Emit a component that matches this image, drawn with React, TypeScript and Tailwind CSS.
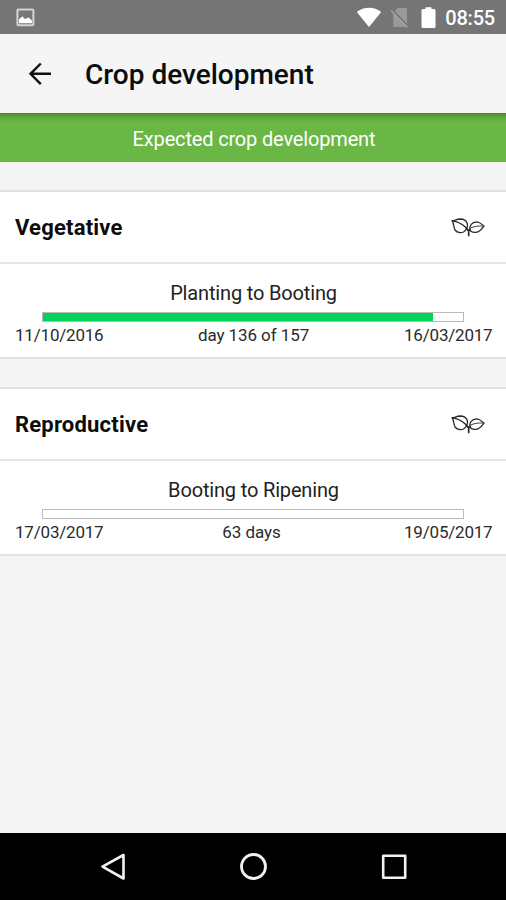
const LeafIcon = () => (
  <svg
    className="mt-px h-[20px] w-[34px]"
    viewBox="0 0 34 20"
    fill="none"
    stroke="#2a2a2a"
    strokeWidth="1.300"
    strokeLinecap="round"
    strokeLinejoin="round"
  >
    <path d="M1.200 2.800C3.500 2.800 5.500 1.100 9 1C12.500 1 15.300 2.600 16.300 5.500C17.200 8.500 15.300 12.500 12.500 14C9.500 15.200 5.800 14.500 4 12C2.500 9.500 3 5.500 1.200 2.800Z" />
    <path d="M1.200 2.800C6 3.500 10.500 5.200 14 8.800L17.500 12.300" />
    <path d="M19 12C18 7.500 21 4.200 25.500 3.900C29.500 3.900 30.700 6.900 33 8C31.200 10.300 29.500 13.700 25 14.300C22.300 14.700 20 14 19 12Z" />
    <path d="M19.500 10C23 8.600 27 7.700 32 8" strokeWidth="0.900" />
    <path d="M15.500 10.500L17.700 13V17.500M19 11.500L17.700 13" strokeWidth="1.700" />
  </svg>
);

const StatusBar = () => (
  <div className="flex h-[34px] items-center justify-between bg-[#757575] pl-[16px] pr-[11px]">
    <svg className="size-[19px]" viewBox="0 0 19 19">
      <rect x="1.400" y="1.400" width="16" height="15.800" rx="1" fill="#777" stroke="#d4d4d4" strokeWidth="2" />
      <path d="M3 15.300V11.500L6.200 8.300L9 11L12.500 9.500L16 12.500V15.300Z" fill="#fff" />
    </svg>
    <div className="flex items-center pt-px">
      <svg className="mr-[8px] h-[22px] w-[26px]" viewBox="0 0 26 22">
        <path d="M0.800 5C7.500 -0.800 18.500 -0.800 25.200 5L13 20Z" fill="#fff" />
      </svg>
      <svg className="mr-[12px] h-[22px] w-[19px]" viewBox="0 0 19 22">
        <path d="M7.500 1H15.500Q17 1 17 2.500V17L5 4.500Z" fill="#999" />
        <path d="M3.200 6V18.500Q3.200 20 4.700 20H16Z" fill="#999" />
        <path d="M1.500 3L17.500 19.500" stroke="#757575" strokeWidth="2.400" />
        <path d="M1 3.500L17.500 20.500" stroke="#a6a6a6" strokeWidth="1.300" />
      </svg>
      <svg className="mr-[9px] h-[22px] w-[15px]" viewBox="0 0 15 22">
        <path d="M4.500 2V0.300H10.500V2H13Q14.500 2 14.500 3.500V19.500Q14.500 21 13 21H2Q0.500 21 0.500 19.500V3.500Q0.500 2 2 2Z" fill="#fff" />
      </svg>
      <span className="text-[20px] leading-[22px] font-medium tracking-[-0.2px] text-white">
        08:55
      </span>
    </div>
  </div>
);

type StageProps = {
  title: string;
  period: string;
  start: string;
  end: string;
  duration: string;
  progress: number;
};

const StageCard = ({
  title,
  period,
  start,
  end,
  duration,
  progress,
}: StageProps) => (
  <section className="h-[169px] border-y-2 border-[#e2e2e2] bg-white">
    <div className="flex h-[72px] items-center justify-between border-b-2 border-[#e6e6e6] pl-[15px] pr-[21px]">
      <h2 className="pt-[2px] text-[22px] leading-7 font-bold tracking-[0.2px] text-[#0c0c0c]">
        {title}
      </h2>
      <LeafIcon />
    </div>
    <div className="pt-[15px]">
      <p className="pl-px text-center text-[20px] leading-[28px] tracking-[-0.16px] text-[#222]">
        {period}
      </p>
      <div className="mx-[42px] mt-[5px] h-[10px] border border-[#bbb]">
        <div className="h-full bg-[#04d35b]" style={{ width: `${progress}%` }} />
      </div>
      <div className="mt-[2px] grid grid-cols-[88px_1fr_88px] pl-[15px] pr-[14px] text-[17px] leading-[22px] tracking-[-0.2px] text-[#2b2b2b]">
        <span>{start}</span>
        <span className={progress > 0 ? "text-center tracking-[-0.08px]" : "pr-[4px] text-center tracking-[-0.08px]"}>
          {duration}
        </span>
        <span className="text-right">{end}</span>
      </div>
    </div>
  </section>
);

const stages: StageProps[] = [
  {
    title: "Vegetative",
    period: "Planting to Booting",
    start: "11/10/2016",
    end: "16/03/2017",
    duration: "day 136 of 157",
    progress: 92.8,
  },
  {
    title: "Reproductive",
    period: "Booting to Ripening",
    start: "17/03/2017",
    end: "19/05/2017",
    duration: "63 days",
    progress: 0,
  },
];

const App = () => {
  return (
    <div className="flex h-[900px] w-[506px] flex-col overflow-hidden bg-[#f4f4f4] font-['Roboto',sans-serif]">
      <StatusBar />
      <header className="flex h-[79px] items-center bg-[#f5f5f5] pl-[28px]">
        <svg className="size-[24px]" viewBox="0 0 24 24" fill="none" stroke="#111" strokeWidth="2.400">
          <path d="M23 11.800H2.500M12.800 1.500L2.500 11.800L12.800 22.100" />
        </svg>
        <h1 className="ml-[33px] pt-[2px] text-[28px] leading-9 font-medium text-[#0c0c0c]">
          Crop development
        </h1>
      </header>
      <div className="flex h-[49px] items-center justify-center bg-[#6bb745] bg-linear-to-b from-[#468c25] via-[#63ab3f] via-[5px] to-[#6bb745] to-[10px] pt-[3px] pl-[2px] text-[20px] tracking-[-0.16px] text-white">
        Expected crop development
      </div>
      <main className="flex flex-1 flex-col gap-[28px] pt-[28px]">
        {stages.map((stage) => (
          <StageCard key={stage.title} {...stage} />
        ))}
      </main>
      <nav className="flex h-[67px] items-center justify-between bg-black pl-[100px] pr-[98px]">
        <svg className="size-[28px]" viewBox="0 0 28 28" fill="none" stroke="#f2f2f2" strokeWidth="2.600" strokeLinejoin="round">
          <path d="M23.500 2V25.500L2.500 13.700Z" />
        </svg>
        <svg className="size-[28px]" viewBox="0 0 28 28" fill="none" stroke="#f2f2f2" strokeWidth="2.800">
          <circle cx="13.500" cy="13.500" r="12" />
        </svg>
        <svg className="size-[28px]" viewBox="0 0 28 28" fill="none" stroke="#f2f2f2" strokeWidth="2.600" strokeLinejoin="round">
          <rect x="3.200" y="2.800" width="22" height="22" />
        </svg>
      </nav>
    </div>
  );
};

export default App;
